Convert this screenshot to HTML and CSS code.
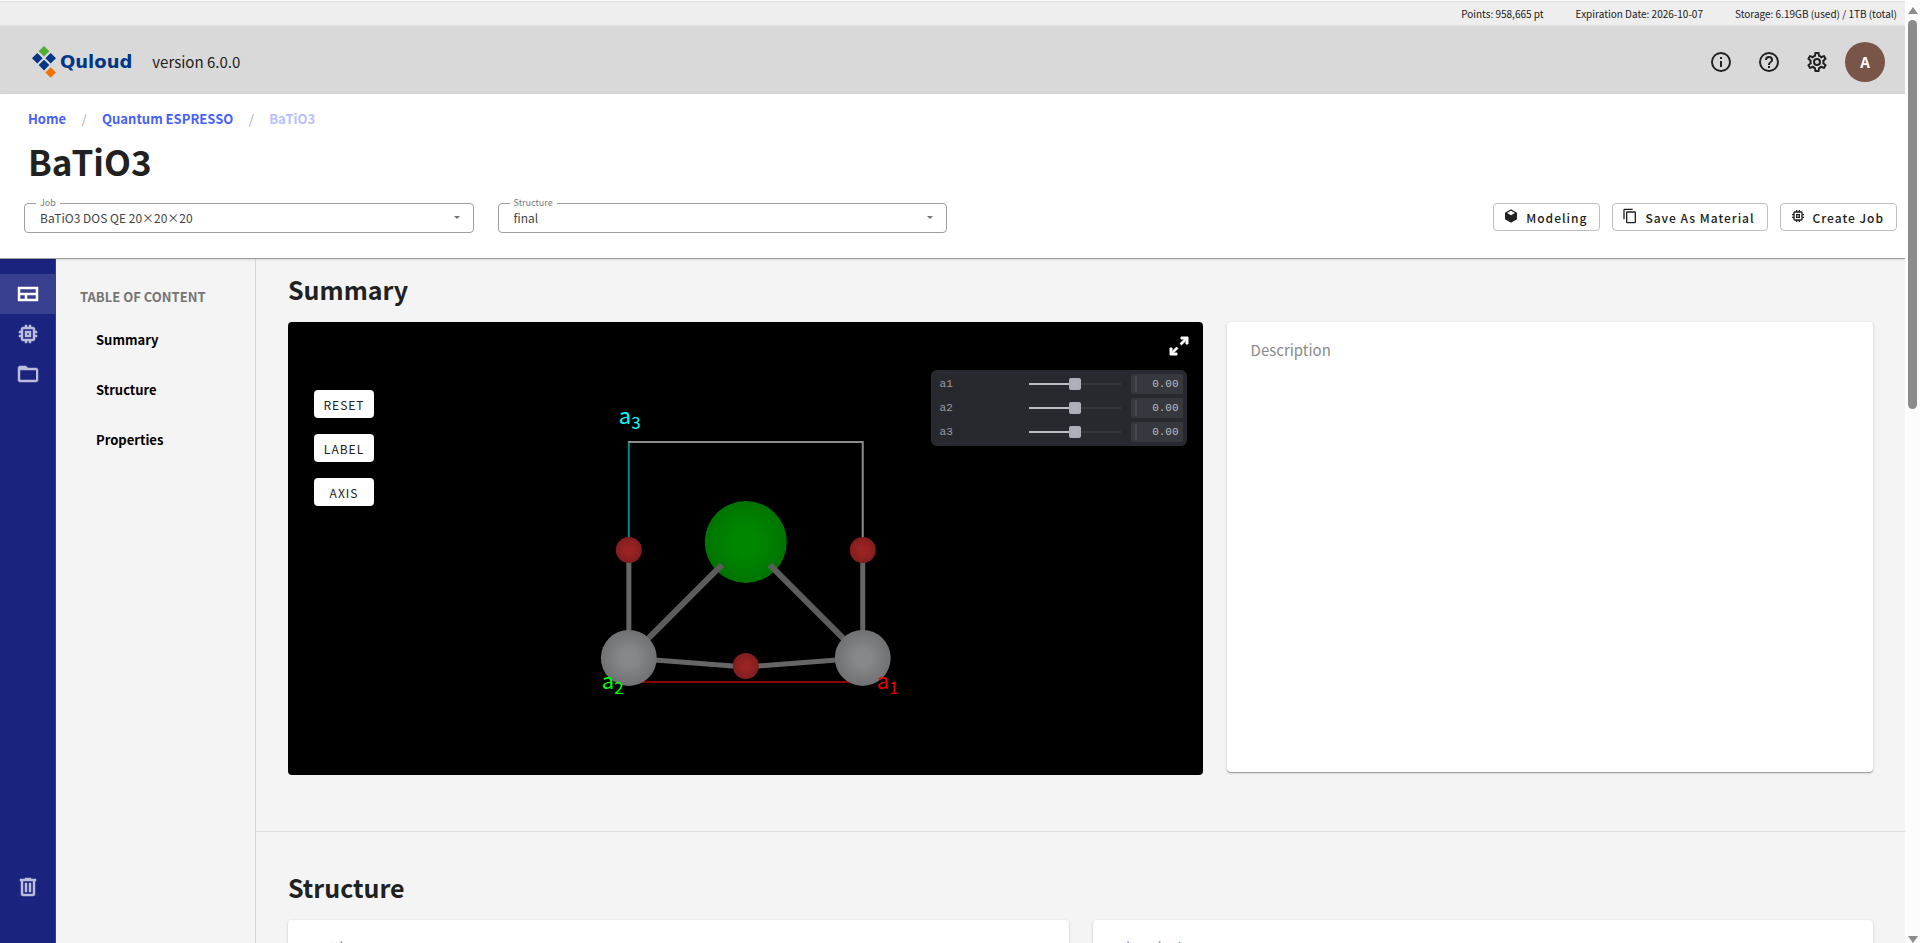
FILE: index.html
```html
<!DOCTYPE html>
<html lang="en">
<head>
  <meta charset="UTF-8">
  <meta name="viewport" content="width=device-width, initial-scale=1.0">
  <title>BaTiO3 - Quloud</title>
  <link rel="stylesheet" href="styles.css">
</head>
<body>
  <div class="app">
    <div class="status-bar">
      <span>Points: 958,665 pt</span>
      <span>Expiration Date: 2026-10-07</span>
      <span>Storage: 6.19GB (used) / 1TB (total)</span>
    </div>

    <header class="app-bar">
      <a class="logo" href="#" aria-label="Quloud">
        <svg width="24" height="32" viewBox="0 0 24 32">
          <path fill="#4fae33" d="M12 0l5.3 5.3L12 10.6 6.700 5.300z"/>
          <path fill="#003686" d="M5.300 6.900l5.300 5.300-5.300 5.300L0 12.200zM18.700 6.900l5.300 5.300-5.300 5.300-5.300-5.300zM12 13.800l5.300 5.300-5.300 5.300-5.300-5.300z"/>
          <path fill="#ee7300" d="M18.700 21.200l5.300 5.300-5.300 5.300-5.300-5.300z"/>
        </svg>
        <span class="logo-text">Quloud</span>
      </a>
      <span class="version">version 6.0.0</span>
      <div class="app-actions">
        <button class="icon-button" aria-label="Information">
          <svg class="icon" viewBox="0 0 24 24"><path d="M11,9H13V7H11M12,20C7.59,20 4,16.41 4,12C4,7.59 7.59,4 12,4C16.41,4 20,7.59 20,12C20,16.41 16.41,20 12,20M12,2A10,10 0 0,0 2,12A10,10 0 0,0 12,22A10,10 0 0,0 22,12A10,10 0 0,0 12,2M11,17H13V11H11V17Z"/></svg>
        </button>
        <button class="icon-button" aria-label="Help">
          <svg class="icon" viewBox="0 0 24 24"><path d="M11,18H13V16H11V18M12,2A10,10 0 0,0 2,12A10,10 0 0,0 12,22A10,10 0 0,0 22,12A10,10 0 0,0 12,2M12,20C7.59,20 4,16.41 4,12C4,7.59 7.59,4 12,4C16.41,4 20,7.59 20,12C20,16.41 16.41,20 12,20M12,6A4,4 0 0,0 8,10H10A2,2 0 0,1 12,8A2,2 0 0,1 14,10C14,12 11,11.75 11,15H13C13,12.75 16,12.5 16,10A4,4 0 0,0 12,6Z"/></svg>
        </button>
        <button class="icon-button" aria-label="Settings">
          <svg class="icon" viewBox="0 0 24 24"><path d="M12,8A4,4 0 0,1 16,12A4,4 0 0,1 12,16A4,4 0 0,1 8,12A4,4 0 0,1 12,8M12,10A2,2 0 0,0 10,12A2,2 0 0,0 12,14A2,2 0 0,0 14,12A2,2 0 0,0 12,10M10,22C9.75,22 9.54,21.82 9.5,21.58L9.13,18.93C8.5,18.68 7.96,18.34 7.44,17.94L4.95,18.95C4.73,19.03 4.46,18.95 4.34,18.73L2.34,15.27C2.21,15.05 2.27,14.78 2.46,14.63L4.57,12.97L4.5,12L4.57,11L2.46,9.37C2.27,9.22 2.21,8.95 2.34,8.73L4.34,5.27C4.46,5.05 4.73,4.96 4.95,5.05L7.44,6.05C7.96,5.66 8.5,5.32 9.13,5.07L9.5,2.42C9.54,2.18 9.75,2 10,2H14C14.25,2 14.46,2.18 14.5,2.42L14.87,5.07C15.5,5.32 16.04,5.66 16.56,6.05L19.05,5.05C19.27,4.96 19.54,5.05 19.66,5.27L21.66,8.73C21.79,8.95 21.73,9.22 21.54,9.37L19.43,11L19.5,12L19.43,13L21.54,14.63C21.73,14.78 21.79,15.05 21.66,15.27L19.66,18.73C19.54,18.95 19.27,19.04 19.05,18.95L16.56,17.95C16.04,18.34 15.5,18.68 14.87,18.93L14.5,21.58C14.46,21.82 14.25,22 14,22H10M11.25,4L10.88,6.61C9.68,6.86 8.62,7.5 7.85,8.39L5.44,7.35L4.69,8.65L6.8,10.2C6.4,11.37 6.4,12.64 6.8,13.8L4.68,15.36L5.43,16.66L7.86,15.62C8.63,16.5 9.68,17.14 10.87,17.38L11.24,20H12.76L13.13,17.39C14.32,17.14 15.37,16.5 16.14,15.62L18.57,16.66L19.32,15.36L17.2,13.81C17.6,12.64 17.6,11.37 17.2,10.2L19.31,8.65L18.56,7.35L16.15,8.39C15.38,7.5 14.32,6.86 13.12,6.62L12.75,4H11.25Z"/></svg>
        </button>
        <button class="avatar">A</button>
      </div>
    </header>

    <div class="page-header">
      <nav class="breadcrumbs" aria-label="Breadcrumb">
        <a href="#">Home</a>
        <span class="divider">/</span>
        <a href="#">Quantum ESPRESSO</a>
        <span class="divider">/</span>
        <a class="current" href="#" aria-current="page">BaTiO3</a>
      </nav>
      <h1>BaTiO3</h1>
      <div class="toolbar">
        <div class="field">
          <label for="job">Job</label>
          <select id="job">
            <option>BaTiO3 DOS QE 20×20×20</option>
          </select>
        </div>
        <div class="field">
          <label for="structure-select">Structure</label>
          <select id="structure-select">
            <option>final</option>
          </select>
        </div>
        <div class="toolbar-actions">
          <button class="outlined-button">
            <svg class="icon-small" viewBox="0 0 24 24"><path d="M21,16.5C21,16.88 20.79,17.21 20.47,17.38L12.57,21.82C12.41,21.94 12.21,22 12,22C11.79,22 11.59,21.94 11.43,21.82L3.53,17.38C3.21,17.21 3,16.88 3,16.5V7.5C3,7.12 3.21,6.79 3.53,6.62L11.43,2.18C11.59,2.06 11.79,2 12,2C12.21,2 12.41,2.06 12.57,2.18L20.47,6.62C20.79,6.79 21,7.12 21,7.5V16.5M12,4.15L6.04,7.5L12,10.85L17.96,7.5L12,4.15Z"/></svg>
            Modeling
          </button>
          <button class="outlined-button">
            <svg class="icon-small" viewBox="0 0 24 24"><path d="M19,21H8V7H19M19,5H8A2,2 0 0,0 6,7V21A2,2 0 0,0 8,23H19A2,2 0 0,0 21,21V7A2,2 0 0,0 19,5M16,1H4A2,2 0 0,0 2,3V17H4V3H16V1Z"/></svg>
            Save As Material
          </button>
          <button class="outlined-button">
            <svg class="icon-small" viewBox="0 0 24 24"><path d="M15 9H9v6h6V9zm-2 4h-2v-2h2v2zm8-2V9h-2V7c0-1.100-.9-2-2-2h-2V3h-2v2h-2V3H9v2H7c-1.100 0-2 .9-2 2v2H3v2h2v2H3v2h2v2c0 1.100.9 2 2 2h2v2h2v-2h2v2h2v-2h2c1.100 0 2-.9 2-2v-2h2v-2h-2v-2h2zm-4 6H7V7h10v10z"/></svg>
            Create Job
          </button>
        </div>
      </div>
    </div>

    <div class="workspace">
      <nav class="sidebar" aria-label="Main">
        <a class="side-item active" href="#" aria-label="Overview">
          <svg class="icon" viewBox="0 0 24 24"><path fill-rule="evenodd" d="M2 5h20v14H2zM4 7v4h16V7zM4 13v4h5v-4zM11 13v4h9v-4z"/></svg>
        </a>
        <a class="side-item" href="#" aria-label="Jobs">
          <svg class="icon" viewBox="0 0 24 24"><path d="M15 9H9v6h6V9zm-2 4h-2v-2h2v2zm8-2V9h-2V7c0-1.100-.9-2-2-2h-2V3h-2v2h-2V3H9v2H7c-1.100 0-2 .9-2 2v2H3v2h2v2H3v2h2v2c0 1.100.9 2 2 2h2v2h2v-2h2v2h2v-2h2c1.100 0 2-.9 2-2v-2h2v-2h-2v-2h2zm-4 6H7V7h10v10z"/></svg>
        </a>
        <a class="side-item" href="#" aria-label="Files">
          <svg class="icon" viewBox="0 0 24 24"><path d="M20,18H4V8H20M20,6H12L10,4H4C2.89,4 2,4.89 2,6V18A2,2 0 0,0 4,20H20A2,2 0 0,0 22,18V8C22,6.89 21.1,6 20,6Z"/></svg>
        </a>
        <a class="side-item trash" href="#" aria-label="Trash">
          <svg class="icon" viewBox="0 0 24 24"><path d="M9,3V4H4V6H5V19A2,2 0 0,0 7,21H17A2,2 0 0,0 19,19V6H20V4H15V3H9M7,6H17V19H7V6M9,8V17H11V8H9M13,8V17H15V8H13Z"/></svg>
        </a>
      </nav>

      <nav class="toc" aria-label="Table of content">
        <div class="toc-title">TABLE OF CONTENT</div>
        <a href="#summary">Summary</a>
        <a href="#structure">Structure</a>
        <a href="#properties">Properties</a>
      </nav>

      <main class="content">
        <section class="section" id="summary">
          <h2>Summary</h2>
          <div class="grid">
            <div class="viewer">
              <svg class="scene" viewBox="0 0 915 453" role="img" aria-label="BaTiO3 unit cell">
                <defs>
                  <radialGradient id="ti"><stop offset="0.3" stop-color="#008700"/><stop offset="1" stop-color="#007400"/></radialGradient>
                  <radialGradient id="ox"><stop offset="0.3" stop-color="#992323"/><stop offset="1" stop-color="#821d1d"/></radialGradient>
                  <radialGradient id="ba"><stop offset="0.3" stop-color="#868788"/><stop offset="1" stop-color="#707172"/></radialGradient>
                </defs>
                <!-- unit cell -->
                <g fill="none" stroke-width="2">
                  <path stroke="#8c8c8c" d="M340 120H575V228"/>
                  <path stroke="#008b8b" d="M341 121V228"/>
                  <path stroke="#8b0000" d="M341 360H575"/>
                </g>
                <circle cx="458" cy="220" r="41" fill="url(#ti)"/>
                <!-- bonds -->
                <g fill="none" stroke="#666" stroke-width="5">
                  <path d="M341 336V228M575 336V228"/>
                  <path d="M341 336L458 345L575 336"/>
                  <path stroke="#5c5c5c" stroke-width="6" d="M341 336L434 243M575 336L482 243"/>
                </g>
                <g fill="url(#ox)">
                  <circle cx="341" cy="228" r="13"/>
                  <circle cx="575" cy="228" r="13"/>
                  <circle cx="458" cy="344" r="13"/>
                </g>
                <g fill="url(#ba)">
                  <circle cx="341" cy="336" r="28"/>
                  <circle cx="575" cy="336" r="28"/>
                </g>
                <g class="axis-label">
                  <text x="331" y="102" fill="#00ffff">a<tspan class="sub" dy="5">3</tspan></text>
                  <text x="314" y="367" fill="#00ff00">a<tspan class="sub" dy="5">2</tspan></text>
                  <text x="589" y="367" fill="#e60000">a<tspan class="sub" dy="5">1</tspan></text>
                </g>
              </svg>

              <div class="viewer-buttons">
                <button>RESET</button>
                <button>LABEL</button>
                <button>AXIS</button>
              </div>

              <button class="expand" aria-label="Full screen">
                <svg class="icon" viewBox="0 0 24 24"><path d="M10,21V19H6.41L10.91,14.5L9.5,13.09L5,17.59V14H3V21H10M14.5,10.91L19,6.41V10H21V3H14V5H17.59L13.09,9.5L14.5,10.91Z"/></svg>
              </button>

              <div class="pane">
                <div class="pane-row">
                  <label for="a1">a1</label>
                  <input type="range" id="a1" min="-1" max="1" step="0.01" value="0">
                  <input type="text" value="0.00" aria-label="a1 value">
                </div>
                <div class="pane-row">
                  <label for="a2">a2</label>
                  <input type="range" id="a2" min="-1" max="1" step="0.01" value="0">
                  <input type="text" value="0.00" aria-label="a2 value">
                </div>
                <div class="pane-row">
                  <label for="a3">a3</label>
                  <input type="range" id="a3" min="-1" max="1" step="0.01" value="0">
                  <input type="text" value="0.00" aria-label="a3 value">
                </div>
              </div>
            </div>

            <div class="card description">Description</div>
          </div>
        </section>

        <section class="section" id="structure">
          <h2>Structure</h2>
          <div class="grid">
            <div class="card half">Lattice</div>
            <div class="card half">Chemical</div>
          </div>
        </section>
      </main>
    </div>
  </div>

  <div class="scrollbar" aria-hidden="true">
    <span class="arrow up"></span>
    <span class="thumb"></span>
    <span class="arrow down"></span>
  </div>
</body>
</html>
```
FILE: styles.css
```css
:root {
  --primary: #1a237e;
  --link: #4660ff;
  --text: #212121;
  --muted: #8a8a8a;
  --shadow: 0 1px 0 #a0a0a0, 0 1px 3px rgba(0, 0, 0, 0.2);
}

* {
  box-sizing: border-box;
}

body {
  margin: 0;
  padding-right: 15px;
  font-family: "Noto Sans CJK JP", "Noto Sans", sans-serif;
  font-size: 13px;
  line-height: 20px;
  color: var(--text);
  background: #fff;
}

button,
select,
input {
  font: inherit;
  color: inherit;
}

button {
  padding: 0;
  border: none;
  background: none;
  cursor: pointer;
}

a {
  color: inherit;
  text-decoration: none;
}

.icon {
  display: block;
  width: 24px;
  height: 24px;
  fill: currentColor;
}

.icon-small {
  width: 16px;
  height: 16px;
  margin-bottom: 4px;
  fill: currentColor;
}

.app {
  display: flex;
  flex-direction: column;
  height: 100vh;
  overflow: hidden;
}

.status-bar {
  display: flex;
  flex: none;
  justify-content: flex-end;
  gap: 32px;
  height: 25px;
  margin-top: 1px;
  padding-right: 8px;
  border-top: 1px solid #e0e0e0;
  background: #eee;
  font-size: 10px;
  line-height: 24px;
}

/* Header */
.app-bar {
  position: relative;
  display: flex;
  flex: none;
  align-items: center;
  height: 68px;
  padding: 4px 20px 0 32px;
  background: #d9d9d9;
  box-shadow: var(--shadow);
}

.logo {
  display: flex;
  align-items: center;
  gap: 4px;
}

.logo-text {
  font-family: "DejaVu Sans", sans-serif;
  font-size: 18px;
  font-weight: bold;
  color: #003686;
}

.version {
  margin-left: 20px;
  font-size: 15px;
}

.app-actions {
  display: flex;
  align-items: center;
  margin-left: auto;
}

.icon-button {
  padding: 12px;
}

.avatar {
  width: 40px;
  height: 40px;
  margin-left: 4px;
  border-radius: 50%;
  background: #795548;
  color: #fff;
  font-size: 15px;
  font-weight: bold;
}

/* Title area */
.page-header {
  position: relative;
  flex: none;
  padding: 15px 8px 25px 24px;
  background: #fff;
  box-shadow: var(--shadow);
}

.breadcrumbs {
  display: flex;
  padding-left: 4px;
  font-weight: bold;
  color: var(--link);
}

.divider {
  width: 36px;
  font-weight: normal;
  text-align: center;
  color: #9eacb4;
}

.breadcrumbs .current {
  color: #b8c0ff;
}

h1 {
  margin: 8px 0 18px 4px;
  font-size: 35px;
  line-height: 48px;
}

.toolbar {
  display: flex;
  align-items: flex-start;
  gap: 24px;
}

.field {
  position: relative;
  flex: 0 0 24%;
}

.field label {
  position: absolute;
  top: -8px;
  left: 12px;
  padding: 0 4px;
  background: #fff;
  font-size: 9px;
  line-height: 16px;
  color: #777;
}

.field select {
  display: block;
  width: 100%;
  height: 30px;
  padding: 0 15px;
  border: 1px solid #9e9e9e;
  border-radius: 4px;
  appearance: none;
  background: #fff;
  font-size: 12px;
  color: #444;
}

.field::after {
  content: "";
  position: absolute;
  top: 13px;
  right: 14px;
  border: 3px solid transparent;
  border-top-color: #757575;
  border-bottom: none;
}

.toolbar-actions {
  display: flex;
  gap: 12px;
  margin-left: auto;
}

.outlined-button {
  display: flex;
  align-items: center;
  gap: 7px;
  height: 28px;
  padding: 2px 12px 0 9px;
  border: 1px solid #bdbdbd;
  border-radius: 4px;
  font-size: 12px;
  font-weight: 500;
  letter-spacing: 1px;
}

/* Body */
.workspace {
  display: flex;
  flex: 1;
  min-height: 0;
  background: #f4f4f4;
}

.sidebar {
  display: flex;
  flex: 0 0 56px;
  flex-direction: column;
  padding: 16px 0 36px;
  border-right: 1px solid #303f9f;
  background: var(--primary);
}

.side-item {
  display: flex;
  align-items: center;
  justify-content: center;
  height: 40px;
  color: #bbbddb;
}

.side-item path {
  stroke: currentColor;
  stroke-width: 0.5;
}

.side-item.active {
  background: #373f8e;
  color: #fff;
}

.trash {
  margin-top: auto;
}

.toc {
  flex: 0 0 200px;
  padding: 29px 24px;
  border-right: 1px solid #d5d5d5;
  font-weight: bold;
}

.toc-title {
  margin-bottom: 8px;
  color: #757575;
}

.toc a {
  display: block;
  padding: 15px 16px;
  color: #000;
}

.content {
  flex: 1;
  min-width: 0;
  overflow: hidden;
}

.section {
  padding: 11px 32px 56px;
  border-bottom: 1px solid #e0e0e0;
}

.section + .section {
  padding-top: 35px;
}

h2 {
  margin: 0 0 13px;
  font-size: 25px;
  line-height: 40px;
}

.grid {
  display: grid;
  grid-template-columns: repeat(12, minmax(0, 1fr));
  align-items: start;
  gap: 24px;
}

.card {
  min-height: 450px;
  padding: 18px 24px;
  border-radius: 4px;
  background: #fff;
  box-shadow: var(--shadow);
  font-size: 15px;
  color: var(--muted);
}

.description {
  grid-column: span 5;
}

.half {
  grid-column: span 6;
}

/* Structure viewer */
.viewer {
  position: relative;
  grid-column: span 7;
  height: 453px;
  border-radius: 4px;
  background: #000;
}

.scene {
  display: block;
  width: 100%;
  height: 100%;
}

.axis-label {
  font-size: 22px;
}

.sub {
  font-size: 17px;
}

.viewer-buttons {
  position: absolute;
  top: 68px;
  left: 26px;
  display: flex;
  flex-direction: column;
  gap: 16px;
}

.viewer-buttons button {
  width: 60px;
  height: 28px;
  padding-top: 2px;
  border-radius: 4px;
  background: #fff;
  font-size: 12px;
  letter-spacing: 1px;
}

.expand {
  position: absolute;
  top: 12px;
  right: 12px;
  color: #fff;
}

.expand path {
  stroke: currentColor;
}

.pane {
  position: absolute;
  top: 48px;
  right: 16px;
  width: 256px;
  padding: 4px;
  border-radius: 6px;
  background: #28292e;
  font-family: "Liberation Mono", monospace;
  font-size: 11px;
  color: #9a9ba2;
}

.pane-row {
  display: flex;
  align-items: center;
  height: 20px;
}

.pane-row + .pane-row {
  margin-top: 4px;
}

.pane-row label {
  flex: 1;
  padding-left: 5px;
}

.pane-row input[type="range"] {
  width: 92px;
  height: 12px;
  margin: 0 10px;
  appearance: none;
  background: linear-gradient(90deg, #bbbcc4 50%, #37383d 50%) center / 100% 2px no-repeat;
}

.pane-row input[type="range"]::-webkit-slider-thumb {
  width: 12px;
  height: 12px;
  appearance: none;
  border-radius: 2px;
  background: #adafb8;
}

.pane-row input[type="text"] {
  width: 52px;
  height: 20px;
  padding: 0 4px;
  border: none;
  border-radius: 2px;
  background: linear-gradient(#47484d, #47484d) 4px center / 2px 16px no-repeat #37383d;
  text-align: right;
  color: #bbbcc4;
}

/* Window scrollbar */
.scrollbar {
  position: fixed;
  top: 2px;
  right: 0;
  bottom: 0;
  display: flex;
  flex-direction: column;
  align-items: center;
  width: 15px;
  padding: 5px 0 0;
  background: #fcfcfc;
}

.thumb {
  width: 9px;
  height: 389px;
  margin-top: 6px;
  border-radius: 5px;
  background: #8b8b8b;
}

.arrow {
  border: 5px solid transparent;
}

.up {
  border-top: none;
  border-bottom: 7px solid #8b8b8b;
}

.down {
  margin-top: auto;
  border-top: 7px solid #8b8b8b;
  border-bottom: none;
}
```
